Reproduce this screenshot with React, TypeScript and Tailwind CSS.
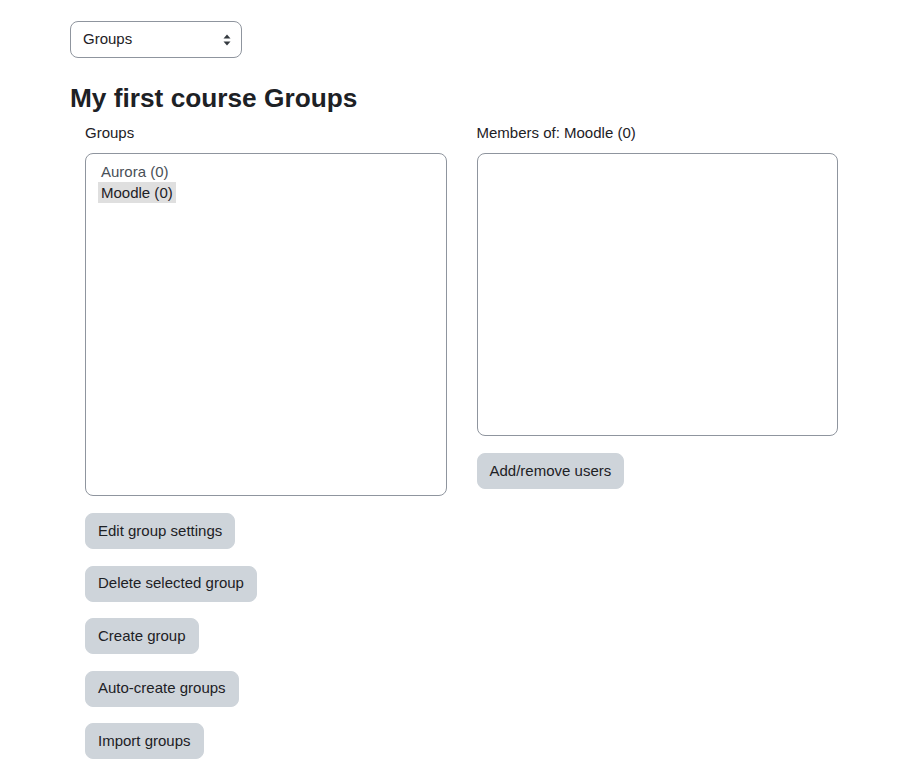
import { useState } from "react";

const groups = [
  { id: "aurora", name: "Aurora", members: 0 },
  { id: "moodle", name: "Moodle", members: 0 },
];

const actions = [
  "Edit group settings",
  "Delete selected group",
  "Create group",
  "Auto-create groups",
  "Import groups",
];

function GreyButton({ label }: { label: string }) {
  return (
    <button
      type="button"
      className="block h-[36px] rounded-[8px] border border-[#ced4da] bg-[#ced4da] px-3 text-[15px] leading-[22.5px] text-[#1d2125]"
    >
      {label}
    </button>
  );
}

export default function App() {
  const [selected, setSelected] = useState("moodle");
  const current = groups.find((g) => g.id === selected);

  return (
    <div className="min-h-[774px] bg-white font-['Liberation_Sans',Arial,sans-serif] text-[15px] leading-[22.5px] text-[#1d2125]">
      <div className="ml-[70px] w-[783px] pt-[21px]">
        {/* Grouping selector */}
        <div className="relative flex h-[37px] w-[172px] items-center rounded-[8px] border border-[#8f959e] pl-3 text-[#1d2125]">
          Groups
          <svg
            className="absolute right-[10px] top-[12px]"
            width="8"
            height="12"
            viewBox="0 0 8 12"
          >
            <path d="M4 0.5 L7.5 4.5 H0.5 Z" fill="#343a40" />
            <path d="M4 11.5 L7.5 7.5 H0.5 Z" fill="#343a40" />
          </svg>
        </div>

        <h2 className="mt-[25px] text-[26.25px] font-bold leading-[31.5px]">
          My first course Groups
        </h2>

        <div className="mt-[7.5px] flex">
          {/* Groups column */}
          <div className="w-[391.5px] px-[15px]">
            <div className="mb-[8.5px]">Groups</div>
            <div className="h-[343px] rounded-[8px] border border-[#8f959e] px-3 pt-[7px]">
              {groups.map((g) => (
                <div
                  key={g.id}
                  onClick={() => setSelected(g.id)}
                  className={
                    g.id === selected
                      ? "w-fit cursor-default bg-[#dfdfdf] px-[3px] leading-[21px] text-[#1d2125]"
                      : "w-fit cursor-default px-[3px] leading-[21px] text-[#495057]"
                  }
                >
                  {g.name} ({g.members})
                </div>
              ))}
            </div>
            <div className="mt-[17px] flex flex-col items-start gap-[16.5px]">
              {actions.map((a) => (
                <GreyButton key={a} label={a} />
              ))}
            </div>
          </div>

          {/* Members column */}
          <div className="w-[391.5px] px-[15px]">
            <div className="mb-[8.5px]">
              Members of: {current?.name} ({current?.members})
            </div>
            <div className="h-[283px] rounded-[8px] border border-[#8f959e]" />
            <div className="mt-[17px]">
              <GreyButton label="Add/remove users" />
            </div>
          </div>
        </div>
      </div>
    </div>
  );
}
